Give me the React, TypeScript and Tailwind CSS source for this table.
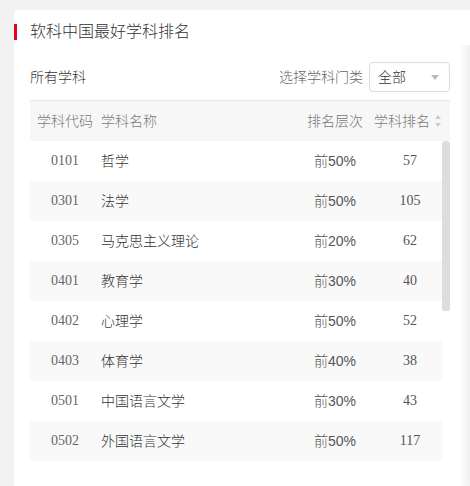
const rows = [
  { code: "0101", name: "哲学", level: "前50%", rank: 57 },
  { code: "0301", name: "法学", level: "前50%", rank: 105 },
  { code: "0305", name: "马克思主义理论", level: "前20%", rank: 62 },
  { code: "0401", name: "教育学", level: "前30%", rank: 40 },
  { code: "0402", name: "心理学", level: "前50%", rank: 52 },
  { code: "0403", name: "体育学", level: "前40%", rank: 38 },
  { code: "0501", name: "中国语言文学", level: "前30%", rank: 43 },
  { code: "0502", name: "外国语言文学", level: "前50%", rank: 117 },
];

const sans = "font-['Liberation_Sans','Noto_Sans_CJK_SC',sans-serif]";
const serif = "font-['Liberation_Serif','Noto_Sans_CJK_SC',serif]";

function SortIcon() {
  return (
    <svg width="6" height="12" viewBox="0 0 6 12" className="shrink-0">
      <path d="M3 0 L6 4 L0 4 Z" fill="#cccccc" />
      <path d="M0 8 L6 8 L3 12 Z" fill="#cccccc" />
    </svg>
  );
}

export default function App() {
  return (
    <div className={`h-[486px] w-[470px] overflow-hidden bg-[#f2f2f2] pl-[14px] pt-[10px] font-light ${sans}`}>
      <div className="flex h-full rounded-tl-[4px] bg-white">
        <div className="w-[445px] shrink-0">
          {/* title */}
          <div className="mt-[14px] flex h-[16px] items-center">
            <div className="h-[16px] w-[3px] bg-[#e60026]" />
            <div className="ml-[13px] text-[16px] leading-[16px] text-[#333]">
              软科中国最好学科排名
            </div>
          </div>

          <div className="pl-[16px] pr-[9px]">
            {/* filter row */}
            <div className="mt-[22px] flex h-[30px] items-center justify-between">
              <div className="text-[14px] leading-[14px] text-[#333]">所有学科</div>
              <div className="flex items-center">
                <span className="text-[14px] leading-[14px] text-[#666]">选择学科门类</span>
                <div className="ml-[6px] flex h-[30px] w-[81px] items-center justify-between rounded-[4px] border border-[#dcdcdc] pl-[8px] pr-[10px]">
                  <span className="text-[14px] leading-[14px] text-[#333]">全部</span>
                  <svg width="8" height="5" viewBox="0 0 8 5">
                    <path d="M0 0 L8 0 L4 5 Z" fill="#bbbbbb" />
                  </svg>
                </div>
              </div>
            </div>

            {/* header */}
            <div className="mt-[8px] flex h-[41px] items-center border-t border-[#e6e6e6] bg-[#f7f7f7] text-[14px] leading-[14px] text-[#777]">
              <div className="w-[70px] text-center">学科代码</div>
              <div className="flex-1 pl-[1px]">学科名称</div>
              <div className="w-[70px] text-center">排名层次</div>
              <div className="flex w-[80px] items-center pl-[4px]">
                <span>学科排名</span>
                <span className="ml-[5px]">
                  <SortIcon />
                </span>
              </div>
            </div>

            {/* body */}
            <div className="flex">
              <div className="flex-1">
                {rows.map((r, i) => (
                  <div
                    key={r.code}
                    className={`flex h-[40px] items-center text-[14px] leading-[14px] ${
                      i % 2 === 1 ? "bg-[#f9f9f9]" : "bg-white"
                    }`}
                  >
                    <div className={`w-[70px] text-center text-[#666] ${serif}`}>{r.code}</div>
                    <div className="flex-1 pl-[1px] text-[#333]">{r.name}</div>
                    <div className="w-[70px] text-center text-[#555]">{r.level}</div>
                    <div className={`ml-[8px] w-[64px] text-center text-[#555] ${serif}`}>{r.rank}</div>
                  </div>
                ))}
              </div>
              <div className="w-[8px]">
                <div className="h-[170px] w-[8px] rounded-t-[4px] rounded-b-[2px] bg-[#dddddd]" />
              </div>
            </div>
          </div>
        </div>

        {/* right shadow */}
        <div className="mt-[35px] flex-1 bg-gradient-to-r from-white to-[#f1f1f1]" />
      </div>
    </div>
  );
}
